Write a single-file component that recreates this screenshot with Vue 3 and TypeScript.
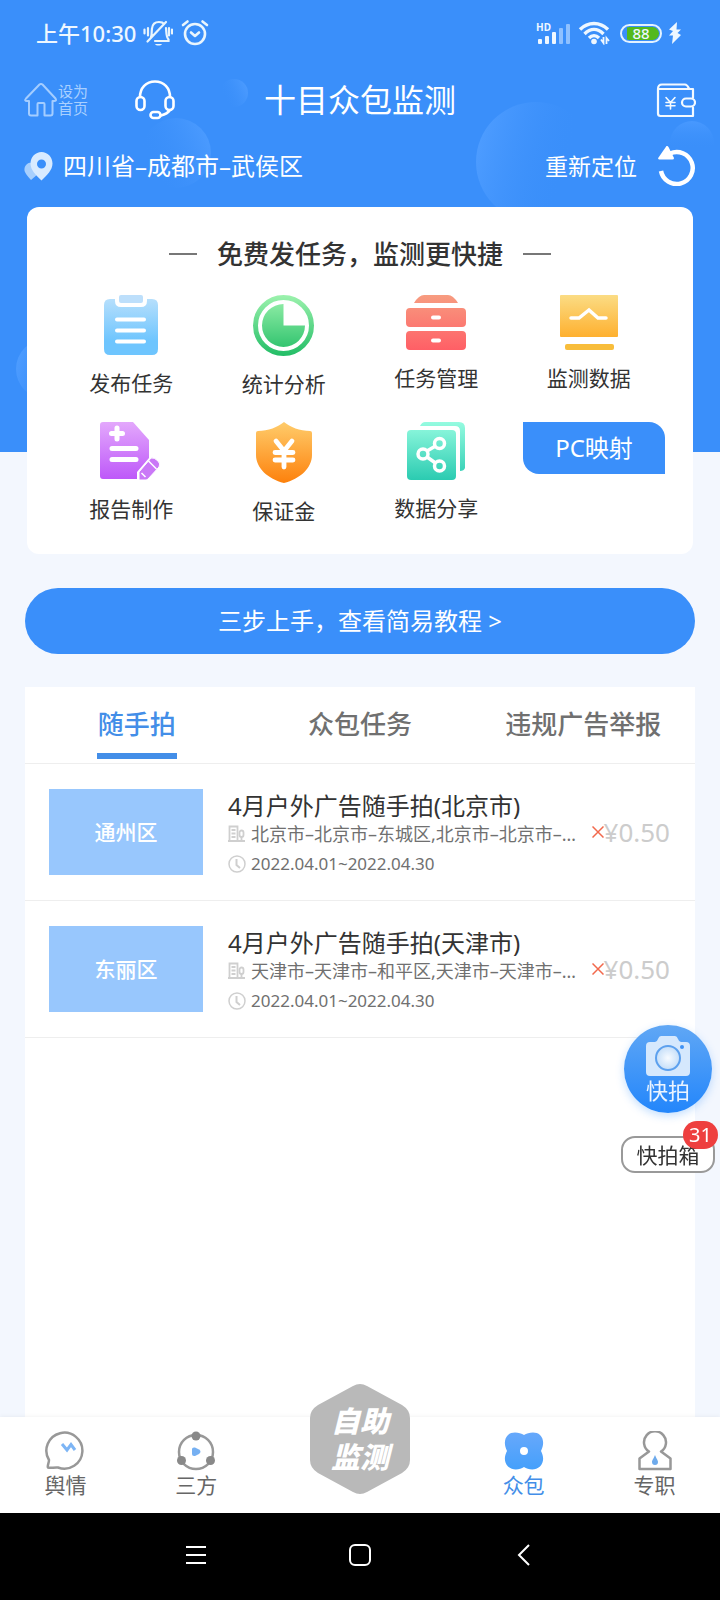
<script setup lang="ts">
import { ref } from 'vue'

interface Task {
  district: string
  title: string
  area: string
  period: string
  price: string
}

const tabs = ['随手拍', '众包任务', '违规广告举报']
const activeTab = ref(0)

const tasks: Task[] = [
  {
    district: '通州区',
    title: '4月户外广告随手拍(北京市)',
    area: '北京市–北京市–东城区,北京市–北京市–西城区',
    period: '2022.04.01~2022.04.30',
    price: '¥0.50',
  },
  {
    district: '东丽区',
    title: '4月户外广告随手拍(天津市)',
    area: '天津市–天津市–和平区,天津市–天津市–河东区',
    period: '2022.04.01~2022.04.30',
    price: '¥0.50',
  },
]
</script>

<template>
  <div class="page">
    <header class="hero">
      <svg class="bubbles" viewBox="0 0 720 452" preserveAspectRatio="xMidYMin slice" aria-hidden="true">
        <defs>
          <linearGradient id="bubA" x1="1" y1="0.2" x2="0.1" y2="0.6">
            <stop offset="0" stop-color="#4d9cff" /><stop offset="1" stop-color="#3a8ffa" stop-opacity="0" />
          </linearGradient>
          <linearGradient id="bubB" x1="0" y1="0.4" x2="0.75" y2="0.6">
            <stop offset="0" stop-color="#4d9cff" /><stop offset="1" stop-color="#3a8ffa" stop-opacity="0" />
          </linearGradient>
          <linearGradient id="bubC" x1="0.5" y1="0" x2="0.5" y2="0.65">
            <stop offset="0" stop-color="#4899ff" /><stop offset="1" stop-color="#3a8ffa" stop-opacity="0" />
          </linearGradient>
        </defs>
        <circle cx="176" cy="153" r="35" fill="url(#bubA)" />
        <circle cx="234" cy="93" r="14" fill="url(#bubA)" />
        <circle cx="536" cy="162" r="60" fill="url(#bubB)" />
        <circle cx="692" cy="143" r="22" fill="url(#bubC)" />
        <circle cx="46" cy="369" r="30" fill="url(#bubB)" />
      </svg>

      <div class="status">
        <span class="clock">上午10:30</span>
        <svg width="30" height="28" viewBox="0 0 30 28" fill="none" stroke="#e9f5fd" stroke-width="2.200" stroke-linecap="round">
          <path d="M8 18C9 16 8.500 12 9 9.500C9.500 5 12.500 3 16 3C18 3 20 3.500 21 5M23 9C23.500 14 23 17.500 25.500 20.500V22H12M4.500 22.500L23 3" />
          <path d="M1.500 10.500V14.500M5 9V16.500M29 10.500V14.500M26 9V16.500" />
          <path d="M12 25H19C18 27 13 27 12 25Z" fill="#e9f5fd" stroke="none" />
        </svg>
        <svg class="alarm" width="28" height="28" viewBox="0 0 28 28" fill="none" stroke="#e9f5fd" stroke-width="2.600" stroke-linecap="round" stroke-linejoin="round">
          <circle cx="14" cy="15" r="10" />
          <path d="M2 6L6.500 2.500M26 6L21.500 2.500M10 13.500L14 17L18 13.500" />
        </svg>
        <svg class="signal" width="34" height="26" viewBox="0 0 34 26">
          <text x="0" y="11" font-size="10" font-weight="700" fill="#eef7ff">HD</text>
          <g fill="#eef7ff">
            <rect x="2" y="19" width="4" height="5" rx="1" /><rect x="9" y="16" width="4" height="8" rx="1" />
            <rect x="16" y="12" width="4" height="12" rx="1" />
          </g>
          <g fill="#8fc1ff"><rect x="23" y="8" width="4" height="16" rx="1" /><rect x="30" y="4" width="4" height="20" rx="1" /></g>
        </svg>
        <svg class="wifi" width="32" height="24" viewBox="0 0 32 24" fill="none" stroke="#eef7ff" stroke-width="3.400">
          <path d="M2 8.500C10 0.500 22 0.500 30 8.500M6.500 13C12.500 7 19.500 7 25.500 13M11 17C14 14 18 14 21 17" />
          <circle cx="16" cy="20.500" r="2.800" fill="#eef7ff" stroke="none" />
          <path d="M23 18.500L25.500 22V16M28.500 23V17L31 20" stroke-width="1.800" />
        </svg>
        <span class="battery"><span>88</span></span>
        <svg class="bolt" width="14" height="24" viewBox="0 0 14 24"><path d="M9 1L1 8.500L5 10L1 14.500H5L4 23L13 14L9.500 12L13 8.500H8.500Z" fill="#eef7ff" /></svg>
      </div>

      <div class="appbar">
        <div class="left-tools">
          <button class="home" type="button">
            <svg width="34" height="34" viewBox="0 0 34 34" fill="none" stroke="#a4cdff" stroke-width="2" stroke-linejoin="round">
              <path d="M15.500 1.500Q17 .5 18.500 1.500L31.500 15.500Q33 18 30 18H28.500V30.500Q28.500 32.500 26.500 32.500H20.500V21Q20.500 20 19.500 20H14.500Q13.500 20 13.500 21V32.500H7Q5 32.500 5 30.500V18H3Q0 18 2 15.500Z" />
            </svg>
            <span>设为<br />首页</span>
          </button>
          <button class="plain" type="button" aria-label="客服">
            <svg width="40" height="40" viewBox="0 0 40 40" fill="none" stroke="#fff" stroke-width="2.600" stroke-linecap="round">
              <path d="M5 17C5 8 11 1.500 20 1.500S35 8 35 17M35 30C33 33 30 34.500 26 35.500" />
              <rect x="1.500" y="17" width="8" height="13" rx="4" /><rect x="30.500" y="17" width="8" height="13" rx="4" />
              <rect x="15.500" y="32" width="10" height="6" rx="3" />
            </svg>
          </button>
        </div>
        <h1>十目众包监测</h1>
        <button class="plain wallet" type="button" aria-label="钱包">
          <svg width="40" height="35" viewBox="0 0 40 35" fill="none" stroke="#f4faff" stroke-width="2.200" stroke-linecap="round" stroke-linejoin="round">
            <path d="M37 14.500V6H2M2 6V30.500Q2 33 4.500 33H37V24.500M2 6Q2 1.500 6 1.500H29Q31 1.500 33 5.500" />
            <rect x="26" y="15.500" width="13" height="8" rx="4" />
            <path d="M10 14.500L14.500 19.500L19 14.500M14.500 19.500V26M10 19.500H19M10 22.800H19" stroke-width="1.600" />
          </svg>
        </button>
      </div>

      <div class="place">
        <svg width="29" height="29" viewBox="0 0 29 29">
          <path d="M7 28C2 22 0 20 .5 16.500C1.500 11 7 9.500 10.500 12L14 22Z" fill="#a7cffd" />
          <path fill-rule="evenodd" d="M17.500 0C23.500 0 28.500 5 28.500 11.500C28.500 18 23 23 17.500 28.500C12 23 6.500 18 6.500 11.500C6.500 5 11.500 0 17.500 0ZM17.500 7.500A4.500 4.500 0 1 0 17.500 16.500A4.500 4.500 0 1 0 17.500 7.500Z" fill="#d9ebff" />
        </svg>
        <span class="region">四川省–成都市–武侯区</span>
        <button class="relocate" type="button">
          重新定位
          <svg width="38" height="40" viewBox="0 0 38 40">
            <path d="M12 7.500A16 16 0 1 1 3 25" fill="none" stroke="#fff" stroke-width="4.500" />
            <path d="M8.500 0Q9.500-.5 10.500 1L16 12Q16 13.500 14.500 13.500H1Q-.5 13 .5 11.500Z" fill="#fff" />
          </svg>
        </button>
      </div>
    </header>

    <main class="content">
      <section class="card">
        <h2><i></i>免费发任务，监测更快捷<i></i></h2>
        <div class="grid">
          <a href="#">
            <svg width="54" height="60" viewBox="0 0 54 60">
              <defs><linearGradient id="gBlue" x1="0" y1="0" x2="0" y2="1"><stop offset="0" stop-color="#b6dffc" /><stop offset=".75" stop-color="#6ec5fe" /></linearGradient></defs>
              <path d="M6 4H11V6Q11 12 17 12H37Q43 12 43 6V4H48Q54 4 54 10V54Q54 60 48 60H6Q0 60 0 54V10Q0 4 6 4Z" fill="url(#gBlue)" />
              <rect x="15" y="0" width="24" height="8" rx="2" fill="#bddffb" />
              <path d="M13 24.500H40M13 35.500H40M13 46.500H40" stroke="#fff" stroke-width="4" stroke-linecap="round" />
            </svg>
            <span>发布任务</span>
          </a>
          <a href="#">
            <svg width="61" height="61" viewBox="0 0 61 61">
              <defs><linearGradient id="gGreen" gradientUnits="userSpaceOnUse" x1="0" y1="0" x2="0" y2="61"><stop offset="0" stop-color="#9cf2ad" /><stop offset="1" stop-color="#22bd66" /></linearGradient></defs>
              <circle cx="30.500" cy="30.500" r="28" fill="none" stroke="url(#gGreen)" stroke-width="5" />
              <path d="M30.500 9A21.500 21.500 0 1 0 52 30.500H30.500Z" fill="url(#gGreen)" />
            </svg>
            <span>统计分析</span>
          </a>
          <a href="#">
            <svg width="60" height="55" viewBox="0 0 60 55">
              <defs><linearGradient id="gRed" gradientUnits="userSpaceOnUse" x1="0" y1="0" x2="0" y2="55"><stop offset="0" stop-color="#f79c80" /><stop offset="1" stop-color="#ff5f66" /></linearGradient></defs>
              <path d="M8 8Q13 0 18 0H42Q47 0 52 8ZM4 13H56Q60 13 60 17V28Q60 32 56 32H4Q0 32 0 28V17Q0 13 4 13ZM4 36H56Q60 36 60 40V51Q60 55 56 55H4Q0 55 0 51V40Q0 36 4 36Z" fill="url(#gRed)" />
              <path d="M27 22.500H33M27 45.500H33" stroke="#fff" stroke-width="4" stroke-linecap="round" />
            </svg>
            <span>任务管理</span>
          </a>
          <a href="#">
            <svg width="58" height="55" viewBox="0 0 58 55">
              <defs><linearGradient id="gGold" x1="0" y1="0" x2="0" y2="1"><stop offset="0" stop-color="#fbdc84" /><stop offset="1" stop-color="#feb02f" /></linearGradient></defs>
              <rect width="58" height="42" rx="1" fill="url(#gGold)" />
              <path d="M11 23H19L29 15L38 23H46" fill="none" stroke="#fff" stroke-width="3.500" stroke-linecap="round" />
              <rect x="5" y="49" width="49" height="6" rx="2" fill="#f8bd3b" />
            </svg>
            <span>监测数据</span>
          </a>
          <a href="#">
            <svg width="62" height="59" viewBox="0 0 62 59">
              <defs><linearGradient id="gPurple" gradientUnits="userSpaceOnUse" x1="0" y1="0" x2="0" y2="58"><stop offset="0" stop-color="#e3a8fc" /><stop offset="1" stop-color="#bd57f9" /></linearGradient></defs>
              <path d="M3 0H33L49 18V36L37 50V57H3Q0 57 0 54V3Q0 0 3 0Z" fill="url(#gPurple)" />
              <path d="M17 6V17M11.500 11.500H22.500M12 26.500H36M12 37.500H36" stroke="#fff" stroke-width="5" stroke-linecap="round" />
              <path d="M51 36Q54 35 58 39Q61 42 59 45L48 57Q47 58 46 58H39V50Z" fill="#ca78f7" stroke="#fff" stroke-width="1" />
              <path d="M48.500 39L56.500 47M41.500 51L45.500 55" stroke="#fff" stroke-width="1.500" />
            </svg>
            <span>报告制作</span>
          </a>
          <a href="#">
            <svg width="56" height="61" viewBox="0 0 56 61">
              <defs><linearGradient id="gOrange" x1="0" y1="0" x2="0" y2="1"><stop offset="0" stop-color="#ffcc6b" /><stop offset="1" stop-color="#fd810c" /></linearGradient></defs>
              <path d="M28 0C34 5 44 9 54 9Q56 9 56 11V33C56 46 44 57 28 61C12 57 0 46 0 33V11Q0 9 2 9C12 9 22 5 28 0Z" fill="url(#gOrange)" />
              <path d="M20 19L28 29L36 19M28 29V45M19 30.500H37M19 38H37" fill="none" stroke="#fff" stroke-width="4.800" stroke-linecap="round" />
            </svg>
            <span>保证金</span>
          </a>
          <a href="#">
            <svg width="58" height="58" viewBox="0 0 58 58">
              <defs><linearGradient id="gTeal" gradientUnits="userSpaceOnUse" x1="0" y1="0" x2="0" y2="58"><stop offset="0" stop-color="#95fbe0" /><stop offset="1" stop-color="#2bcbb1" /></linearGradient></defs>
              <path d="M13 4Q15 0 18 0H52Q58 0 58 6V46Q57 49 53 49V9Q53 4 48 4Z" fill="url(#gTeal)" />
              <rect y="8" width="49" height="50" rx="4" fill="url(#gTeal)" />
              <g fill="none" stroke="#fff" stroke-width="3.500"><circle cx="16" cy="32" r="5" /><circle cx="32.500" cy="21.500" r="5" /><circle cx="32.500" cy="44" r="5" /><path d="M20 29L28.500 24M20 35L28.500 41" /></g>
            </svg>
            <span>数据分享</span>
          </a>
          <button class="pc" type="button">PC映射</button>
        </div>
      </section>

      <button class="guide" type="button">三步上手，查看简易教程 &gt;</button>

      <section class="panel">
        <div class="tabs" role="tablist">
          <button v-for="(tab, i) in tabs" :key="tab" type="button" role="tab" :aria-selected="activeTab === i" :class="{ on: activeTab === i }" @click="activeTab = i">
            <span>{{ tab }}</span>
          </button>
        </div>
        <article v-for="task in tasks" :key="task.district" class="task">
          <div class="thumb">{{ task.district }}</div>
          <div class="info">
            <h3>{{ task.title }}</h3>
            <p class="area">
              <svg width="18" height="18" viewBox="0 0 18 18" fill="none" stroke="#cfcfcf" stroke-width="1.800">
                <path d="M1.500 16V1.500H9.500V16M0 16H17M3.500 5H7.500M3.500 8.500H7.500M3.500 12H7.500M13.500 16V11" /><rect x="11.500" y="5.500" width="4" height="6.500" rx="2" />
              </svg>
              <span>{{ task.area }}</span>
            </p>
            <p class="date">
              <svg width="18" height="18" viewBox="0 0 18 18" fill="none" stroke="#cfcfcf" stroke-width="1.500"><circle cx="9" cy="9" r="8" /><path d="M8.500 4V10L12 13" stroke-width="2" /></svg>
              <span>{{ task.period }}</span>
            </p>
          </div>
          <div class="price">
            <svg width="12" height="12" viewBox="0 0 12 12" stroke="#f2694c" stroke-width="1.500"><path d="M.5 .5L11.500 11.500M11.500 .5L.5 11.500" /></svg>
            <span>{{ task.price }}</span>
          </div>
        </article>
      </section>
    </main>

    <aside class="floating">
      <button class="snap" type="button">
        <svg width="44" height="40" viewBox="0 0 44 40">
          <defs><radialGradient id="lens"><stop offset="0" stop-color="#f7fbff" /><stop offset="1" stop-color="#c4def9" /></radialGradient></defs>
          <path d="M4 6H9Q11 6 12 3Q13 0 15 0H29Q31 0 32 3Q33 6 35 6H40Q44 6 44 10V36Q44 40 40 40H4Q0 40 0 36V10Q0 6 4 6Z" fill="#d5e8fd" />
          <circle cx="22" cy="22" r="12" fill="url(#lens)" stroke="#5ca0ee" stroke-width="2" /><circle cx="36" cy="11" r="2" fill="#3f92f5" />
        </svg>
        <span>快拍</span>
      </button>
      <button class="snap-box" type="button">快拍箱<b>31</b></button>
    </aside>

    <nav class="tabbar">
      <a href="#">
        <svg width="40" height="40" viewBox="0 0 40 40" fill="none">
          <path d="M4 29A18 18 0 1 1 13 36.500C9 36 6 37.500 3 36.500C2 35 4 32 4 29Z" stroke="#989898" stroke-width="2.500" stroke-linejoin="round" />
          <path d="M17 13L22 19L26 13.500L30 19" stroke="#7db5f5" stroke-width="3" />
        </svg>
        <span>舆情</span>
      </a>
      <a href="#">
        <svg width="40" height="40" viewBox="0 0 40 40" fill="none">
          <circle cx="20" cy="21" r="17" stroke="#989898" stroke-width="2.500" />
          <g fill="#898989"><circle cx="20" cy="5" r="4.500" /><circle cx="5.500" cy="29.500" r="4.500" /><circle cx="34.500" cy="29.500" r="4.500" /></g>
          <path d="M16 18Q16 16 19 16.500L23 18.500Q26 20.500 23 23L19 25Q16 25.500 16 23Z" fill="#76b0f2" />
        </svg>
        <span>三方</span>
      </a>
      <a class="center" href="#">
        <span class="hex">
          <svg width="100" height="110" viewBox="0 0 100 110"><path d="M43 2Q50-2 57 2L92 21Q100 26 100 34V76Q100 84 92 89L57 108Q50 112 43 108L8 89Q0 84 0 76V34Q0 26 8 21Z" fill="#b9b9b9" /></svg>
          <strong>自助<br />监测</strong>
        </span>
      </a>
      <a class="on" href="#">
        <svg width="40" height="40" viewBox="0 0 40 40">
          <defs><linearGradient id="petal" x1="0" y1="0" x2="0" y2="1"><stop offset="0" stop-color="#67a8fb" /><stop offset="1" stop-color="#45a0fb" /></linearGradient></defs>
          <path fill-rule="evenodd" d="M20 4C24 1.500 32 0 36 4C40 8 40 14 37 20C40 26 40 31 36 35.500C31 40 24 38.500 20 36C16 38.500 9 40 4 35.500C0 31 0 26 3 20C0 14 0 8 4 4C8 0 16 1.500 20 4ZM20 16A4 4 0 1 0 20 24A4 4 0 1 0 20 16Z" fill="url(#petal)" />
        </svg>
        <span>众包</span>
      </a>
      <a href="#">
        <svg width="40" height="40" viewBox="0 0 40 40" fill="none">
          <path d="M14 20.500A11 11 0 1 1 26 20.500L35.500 27.500V38H4.500V27.500Z" stroke="#989898" stroke-width="2.500" stroke-linejoin="round" />
          <path d="M20 24C21.500 28 23 29 23 31A3 3 0 0 1 17 31C17 29 18.500 28 20 24Z" fill="#6fabec" />
        </svg>
        <span>专职</span>
      </a>
    </nav>

    <div class="system">
      <button type="button" aria-label="菜单"><svg width="22" height="22" viewBox="0 0 22 22" stroke="#fff" stroke-width="2"><path d="M1 3H21M1 11H21M1 19H21" /></svg></button>
      <button type="button" aria-label="主屏幕"><svg width="22" height="22" viewBox="0 0 22 22" fill="none" stroke="#fff" stroke-width="2"><rect x="1" y="1" width="20" height="20" rx="5" /></svg></button>
      <button type="button" aria-label="返回"><svg width="22" height="22" viewBox="0 0 22 22" fill="none" stroke="#fff" stroke-width="2"><path d="M16 1L6 11L16 21" /></svg></button>
    </div>
  </div>
</template>

<style>
body {
  margin: 0;
}
</style>

<style scoped>
* {
  box-sizing: border-box;
}
.page {
  position: relative;
  display: flex;
  flex-direction: column;
  min-height: 100vh;
  background: #f3f7fe;
  color: #333;
  font-family: "Noto Sans", "Noto Sans CJK SC", sans-serif;
}
svg {
  display: block;
  flex: none;
}
h1, h2, h3, p {
  margin: 0;
}
a {
  color: inherit;
  text-decoration: none;
}
button {
  margin: 0;
  padding: 0;
  border: 0;
  background: none;
  color: inherit;
  font: inherit;
  cursor: pointer;
}

.hero {
  position: relative;
  padding-bottom: 254px;
  background: #3a8ffa;
  color: #fff;
}
.bubbles {
  position: absolute;
  inset: 0;
  width: 100%;
  height: 100%;
}
.status, .appbar, .place {
  position: relative;
  display: flex;
  align-items: center;
}
.status {
  height: 66px;
  padding: 0 38px 0 36px;
  color: #eef7ff;
}
.clock {
  margin-right: 7px;
  font-size: 22px;
  font-weight: 500;
  line-height: 28px;
}
.alarm {
  margin-left: 8px;
}
.signal {
  margin-left: auto;
}
.wifi {
  margin-left: 8px;
}
.battery {
  display: flex;
  width: 42px;
  height: 19px;
  margin: 0 6px 0 10px;
  padding: 1px;
  border: 2px solid #e3f2ff;
  border-radius: 10px;
}
.battery span {
  flex: 1;
  border-radius: 8px;
  background: linear-gradient(90deg, transparent 12%, #53b91d 12%);
  font-size: 15px;
  font-weight: 500;
  line-height: 13px;
  text-align: center;
}
.appbar {
  display: grid;
  grid-template-columns: 1fr auto 1fr;
  height: 68px;
  padding: 0 24px;
}
.left-tools {
  display: flex;
  align-items: center;
  gap: 47px;
}
.home {
  display: flex;
  align-items: center;
  color: #a9d0ff;
  font-size: 15px;
  line-height: 17px;
}
h1 {
  font-size: 32px;
  font-weight: 400;
  line-height: 44px;
}
.wallet {
  justify-self: end;
}
.place {
  height: 64px;
  padding: 0 24px;
  font-size: 24px;
  line-height: 32px;
}
.region {
  margin-left: 10px;
}
.relocate {
  display: flex;
  align-items: center;
  gap: 21px;
  margin-left: auto;
  font-size: 23px;
}

.content {
  position: relative;
  display: flex;
  flex: 1;
  flex-direction: column;
  margin-top: -245px;
  padding: 0 25px;
}
.card {
  margin: 0 2px;
  padding: 30px 28px 5px;
  border-radius: 12px;
  background: #fff;
}
h2 {
  display: flex;
  align-items: center;
  justify-content: center;
  gap: 20px;
  font-size: 26px;
  font-weight: 500;
  line-height: 34px;
}
h2 i {
  width: 28px;
  height: 2px;
  background: #777;
}
.grid {
  display: grid;
  grid-template-columns: repeat(4, 1fr);
  grid-auto-rows: 127px;
  margin-top: 24px;
  font-size: 21px;
  line-height: 30px;
}
.grid a {
  display: flex;
  flex-direction: column;
  align-items: center;
  gap: 13px;
}
.pc {
  width: 142px;
  height: 52px;
  justify-self: end;
  border-radius: 0 16px;
  background: #3a8ffa;
  color: #fff;
  font-size: 24px;
}
.guide {
  height: 66px;
  margin-top: 34px;
  border-radius: 33px;
  background: #3a8ffa;
  color: #fff;
  font-size: 24px;
  line-height: 32px;
}
.panel {
  flex: 1;
  margin-top: 33px;
  background: #fff;
}
.tabs {
  display: grid;
  grid-template-columns: repeat(3, 1fr);
  height: 77px;
  border-bottom: 1px solid #eee;
}
.tabs button {
  display: flex;
  flex-direction: column;
  align-items: center;
  padding-top: 19px;
  color: #707070;
  font-size: 26px;
  font-weight: 500;
  line-height: 36px;
}
.tabs .on {
  color: #438ee8;
}
.tabs .on::after {
  width: 80px;
  height: 6px;
  margin-top: 11px;
  background: #438ee8;
  content: "";
}
.task {
  display: flex;
  align-items: center;
  padding: 25px 25px 25px 24px;
  border-bottom: 1px solid #eee;
}
.thumb {
  flex: none;
  width: 154px;
  margin-right: 25px;
  background: #98c7fd;
  color: #fff;
  font-size: 21px;
  font-weight: 500;
  line-height: 86px;
  text-align: center;
}
.info {
  flex: 1;
  min-width: 0;
  color: #707070;
}
h3 {
  color: #333;
  font-size: 24px;
  font-weight: 400;
  line-height: 34px;
}
.info p {
  display: flex;
  align-items: center;
  gap: 5px;
  line-height: 22px;
}
.area {
  font-size: 18px;
}
.area span {
  overflow: hidden;
  text-overflow: ellipsis;
  white-space: nowrap;
}
.info .date {
  margin-top: 8px;
  font-size: 17px;
}
.price {
  display: flex;
  flex: none;
  align-items: center;
  margin-left: 14px;
  color: #ccc;
  font-size: 26px;
  line-height: 36px;
}

.floating {
  position: fixed;
  right: 5px;
  bottom: 427px;
  display: flex;
  flex-direction: column;
  align-items: center;
  gap: 23px;
}
.snap {
  display: flex;
  flex-direction: column;
  align-items: center;
  width: 88px;
  height: 88px;
  padding-top: 11px;
  border-radius: 50%;
  background: linear-gradient(#60a7f5, #2386fb);
  box-shadow: 0 3px 8px #2386fb44;
  color: #eaf4ff;
  font-size: 22px;
  line-height: 28px;
}
.snap-box {
  position: relative;
  width: 94px;
  height: 37px;
  border: 2px solid #999;
  border-radius: 14px;
  background: #fff;
  font-size: 21px;
  line-height: 32px;
}
.snap-box b {
  position: absolute;
  top: -17px;
  right: -5px;
  width: 35px;
  border-radius: 14px;
  background: #ee3f3f;
  color: #fff;
  font-size: 20px;
  font-weight: 400;
  line-height: 28px;
}

.tabbar {
  position: relative;
  display: flex;
  height: 96px;
  background: #fff;
  box-shadow: 0 -1px 4px #0000000c;
  color: #666;
  font-size: 21px;
  line-height: 28px;
}
.tabbar a {
  display: flex;
  flex: 2;
  flex-direction: column;
  align-items: center;
  padding-top: 14px;
}
.tabbar .center {
  flex: 3;
  padding: 0;
}
.tabbar .on {
  color: #438ee8;
}
.hex {
  display: grid;
  place-items: center;
  margin-top: -33px;
}
.hex > * {
  grid-area: 1 / 1;
}
.hex strong {
  position: relative;
  color: #fff;
  font-size: 29px;
  font-style: italic;
  font-weight: 900;
  line-height: 36px;
}
.system {
  display: grid;
  grid-template-columns: repeat(3, 1fr);
  justify-items: center;
  align-items: center;
  height: 87px;
  padding: 0 114px 4px;
  background: #000;
}
</style>
